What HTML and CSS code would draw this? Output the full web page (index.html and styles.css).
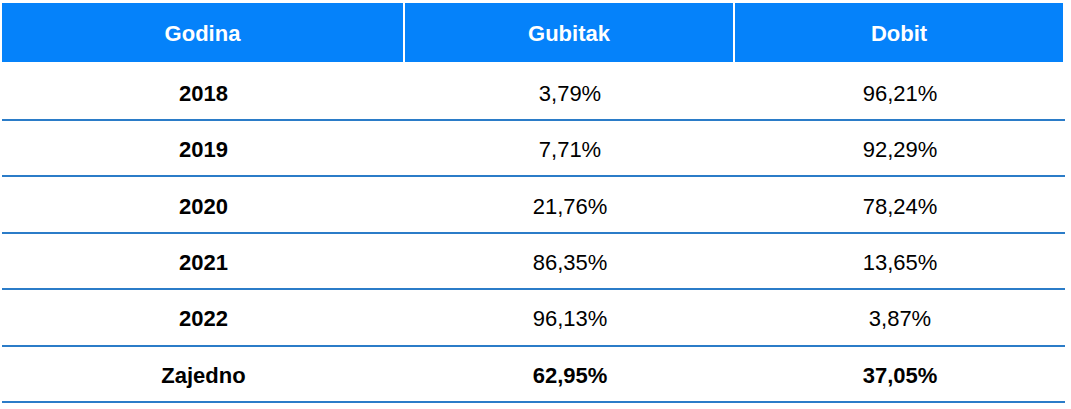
FILE: index.html
```html
<!DOCTYPE html>
<html lang="hr">
<head>
<meta charset="utf-8">
<title>Godina – Gubitak – Dobit</title>
<link rel="stylesheet" href="styles.css">
</head>
<body>
<table class="results">
  <colgroup>
    <col class="col-year">
    <col class="col-val">
    <col class="col-val">
  </colgroup>
  <thead>
    <tr><th>Godina</th><th>Gubitak</th><th>Dobit</th></tr>
  </thead>
  <tbody>
    <tr class="first"><td class="year">2018</td><td>3,79%</td><td>96,21%</td></tr>
    <tr><td class="year">2019</td><td>7,71%</td><td>92,29%</td></tr>
    <tr><td class="year">2020</td><td>21,76%</td><td>78,24%</td></tr>
    <tr><td class="year">2021</td><td>86,35%</td><td>13,65%</td></tr>
    <tr><td class="year">2022</td><td>96,13%</td><td>3,87%</td></tr>
    <tr class="total"><td>Zajedno</td><td>62,95%</td><td>37,05%</td></tr>
  </tbody>
</table>
</body>
</html>
```

FILE: styles.css
```css
html, body {
  background: #ffffff;
}
body {
  margin: 3px 0 0 2px;
  font-family: "Liberation Sans", Arial, sans-serif;
  color: #000000;
}
.results {
  border-collapse: separate;
  border-spacing: 0;
  width: 1063px;
  table-layout: fixed;
}
.col-year { width: 403px; }
.col-val { width: 330px; }
.results th {
  background: #0582fa;
  color: #ffffff;
  font-size: 22px;
  font-weight: bold;
  height: 59px;
  padding: 2px 0 0 0;
  box-sizing: border-box;
  border-right: 2px solid #ffffff;
  text-align: center;
  vertical-align: middle;
}
.results td {
  font-size: 22px;
  height: 56.4px;
  box-sizing: border-box;
  padding: 4px 0 0 0;
  border-bottom: 2px solid #2b7cc8;
  text-align: center;
  vertical-align: middle;
}
.results tr.first td {
  height: 59px;
  padding-top: 6px;
}
.results td.year,
.results tr.total td {
  font-weight: bold;
}
```
